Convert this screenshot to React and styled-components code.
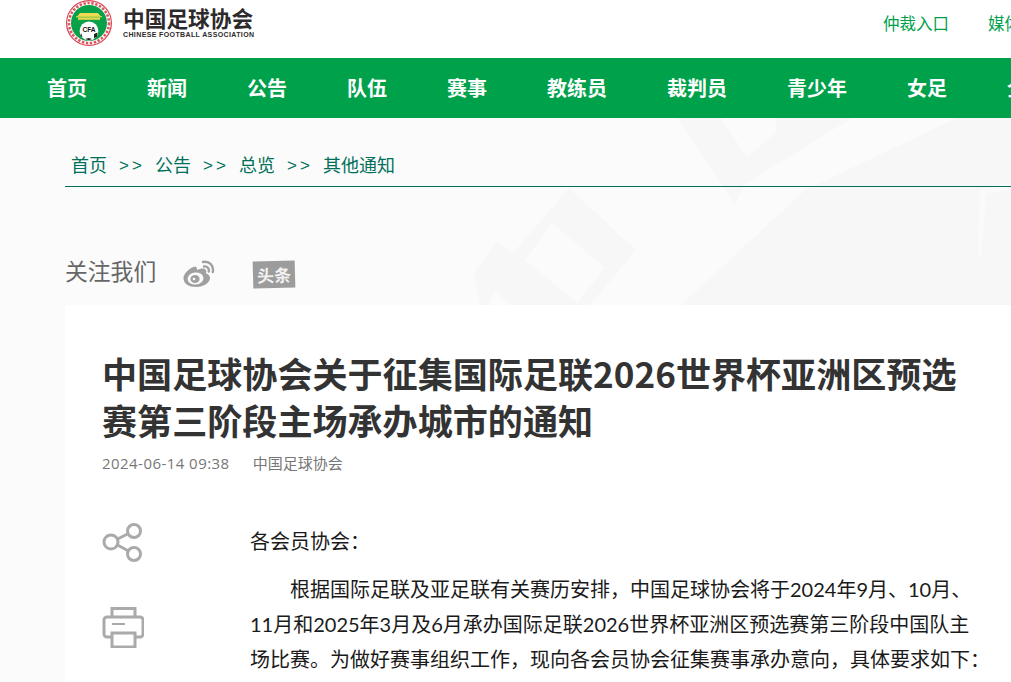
import React from "react";
import styled, { createGlobalStyle } from "styled-components";

const Global = createGlobalStyle`
  html, body { margin: 0; padding: 0; overflow: hidden; background: #fbfbfb; }
  body { font-family: "Noto Sans CJK SC", "Liberation Sans", sans-serif; }
  * { box-sizing: border-box; }
`;

const Page = styled.div`
  position: relative;
  width: 1011px;
  height: 682px;
  overflow: hidden;
  background: #fbfbfb;
`;
const Header = styled.header`
  height: 58px;
  background: #fff;
  display: flex;
  justify-content: space-between;
  padding-left: 66px;
`;
const LogoBox = styled.a`
  display: flex;
  align-items: flex-start;
  gap: 11px;
`;
const LogoText = styled.div`
  display: flex;
  flex-direction: column;
  padding-top: 5px;
  color: #2d2a2b;
`;
const LogoCn = styled.span`
  font-size: 21.7px;
  line-height: 25px;
  font-weight: 700;
  white-space: nowrap;
`;
const LogoEn = styled.span`
  margin-top: 1px;
  font-family: "Liberation Sans", sans-serif;
  font-size: 7px;
  line-height: 8px;
  font-weight: 700;
  letter-spacing: 0.38px;
  white-space: nowrap;
`;
const TopLinks = styled.nav`
  display: flex;
  gap: 39px;
  white-space: nowrap;
  padding-top: 11px;
  margin-right: -23px;
  width: 151px;
`;
const TopLink = styled.a`
  font-size: 16.5px;
  line-height: 24px;
  color: #00a14b;
`;
const MainNav = styled.nav`
  height: 60px;
  background: #00a14b;
  display: flex;
  align-items: center;
  gap: 60px;
  padding-left: 47px;
  white-space: nowrap;
`;
const NavItem = styled.a`
  color: #fff;
  font-size: 20px;
  font-weight: 700;
  line-height: 60px;
`;
const Watermark = styled.svg`
  position: absolute;
  left: 0;
  top: 118px;
  width: 1011px;
  height: 187px;
`;
const Content = styled.main`
  position: relative;
  padding-left: 65px;
`;
const Crumbs = styled.div`
  height: 69px;
  border-bottom: 1px solid #00705a;
  padding: 32px 0 0 6px;
  display: flex;
  gap: 12px;
  color: #00705a;
  font-size: 18px;
  line-height: 28px;
`;
const Sep = styled.span`
  flex: none;
  width: 24px;
  padding-top: 2px;
  font-family: "Liberation Sans", sans-serif;
  font-size: 17px;
  letter-spacing: 3px;
  white-space: nowrap;
`;
const Follow = styled.div`
  height: 118px;
  display: flex;
  align-items: flex-start;
  padding-top: 67px;
`;
const FollowLabel = styled.span`
  font-size: 22.8px;
  line-height: 34px;
  color: #666;
  width: 118px;
`;
const WeiboIcon = styled.svg`
  width: 32px;
  height: 28px;
  margin-top: 6px;
`;
const ToutiaoBadge = styled.span`
  margin: 7px 0 0 38px;
  width: 42px;
  height: 27px;
  background: #9c9c9c;
  color: #f2f2f2;
  font-size: 17px;
  line-height: 27px;
  font-weight: 700;
  text-align: center;
  white-space: nowrap;
  transform: rotate(-1.5deg);
`;
const Card = styled.article`
  background: #fff;
  height: 377px;
  padding: 44px 0 0 37px;
`;
const Title = styled.h1`
  margin: 0;
  width: 880px;
  font-size: 35.1px;
  line-height: 47px;
  font-weight: 700;
  color: #333;
`;
const Meta = styled.div`
  margin-top: 9px;
  display: flex;
  gap: 23px;
  font-size: 15px;
  line-height: 22px;
  color: #777;
`;
const MetaDate = styled.span`
  font-family: "Open Sans", "Liberation Sans", sans-serif;
  letter-spacing: 0.45px;
`;
const Body = styled.div`
  display: flex;
  margin-top: 50px;
`;
const Tools = styled.aside`
  width: 148px;
  flex: none;
  display: flex;
  flex-direction: column;
  gap: 42px;
  margin-top: -2px;
`;
const Text = styled.div`
  width: 745px;
  color: #1a1a1a;
  font-family: "Lato", "Noto Sans CJK SC", sans-serif;
  font-size: 20px;
  line-height: 35px;
`;
const Para = styled.p`
  margin: 0 0 13px;
  text-indent: ${(p) => (p.$indent ? "40px" : "0")};
`;

const navItems = ["首页", "新闻", "公告", "队伍", "赛事", "教练员", "裁判员", "青少年", "女足", "全民"];

function Emblem() {
  return (
    <svg width="46" height="46" viewBox="0 0 46 46" aria-hidden="true">
      <circle cx="23" cy="23" r="22.4" fill="#fff" stroke="#d8434f" strokeWidth="1.2" />
      <circle cx="23" cy="23" r="20" fill="none" stroke="#dd5560" strokeWidth="2.6" strokeDasharray="2.4 1.6" />
      <circle cx="23" cy="23" r="18" fill="#09a04a" />
      <path d="M14 13h18l2.500 3h-23z" fill="#eed94f" />
      <rect x="10" y="16" width="26" height="1.400" fill="#bfd44b" />
      <rect x="12" y="17.400" width="22" height="2.400" fill="#e6d64b" />
      <circle cx="23" cy="31" r="9.400" fill="#fff" />
      <path d="M28 34l3.500-1.500-.5 4-3 2zM15 33l1.500 4-2-1zM19 39l4-1 3 1-3 1.300z" fill="#222" />
      <text x="23" y="32" textAnchor="middle" fontFamily="Liberation Sans, sans-serif" fontWeight="700" fontSize="6.6" fill="#111">CFA</text>
    </svg>
  );
}

export default function App() {
  return (
    <Page>
      <Global />
      <Header>
        <LogoBox>
          <Emblem />
          <LogoText>
            <LogoCn>中国足球协会</LogoCn>
            <LogoEn>CHINESE FOOTBALL ASSOCIATION</LogoEn>
          </LogoText>
        </LogoBox>
        <TopLinks>
          <TopLink>仲裁入口</TopLink>
          <TopLink>媒体入口</TopLink>
        </TopLinks>
      </Header>
      <MainNav>
        {navItems.map((n) => (
          <NavItem key={n}>{n}</NavItem>
        ))}
      </MainNav>
      <Watermark viewBox="0 118 1011 187" aria-hidden="true">
        <g fill="#f7f7f7">
          <path d="M677 118h44l26 39 29-24v-15h76L745 184l-10 20z" />
          <path d="M681 305L805 190 957 118H1011V305z" />
          <path d="M569 188l67 62-46 55H480l-6-32 23-31 16 11z" />
        </g>
        <path d="M552 223l53 45-28 35-52-43z" fill="#fbfbfb" />
        <path d="M495 290l14 15h-20z" fill="#fbfbfb" />
        <path d="M980 190l31-8v8l-24 4-6 63-3-1z" fill="#fafafa" />
      </Watermark>
      <Content>
        <Crumbs>
          <span>首页</span>
          <Sep>&gt;&gt;</Sep>
          <span>公告</span>
          <Sep>&gt;&gt;</Sep>
          <span>总览</span>
          <Sep>&gt;&gt;</Sep>
          <span>其他通知</span>
        </Crumbs>
        <Follow>
          <FollowLabel>关注我们</FollowLabel>
          <WeiboIcon viewBox="0 0 32 28" aria-hidden="true">
            <path d="M12 6.500C6 8 .5 13.500.5 18.500.5 23.500 6 27 13 27c8 0 14-4.500 14-9 0-3-2.500-4-4-4.500 1-2.500 0-5.500-4-5-2 .2-3.500 1-5 1.500.3-2.500-1-4-3-3.500z" fill="#a0a0a0" />
            <ellipse cx="12.500" cy="18.500" rx="8" ry="6" fill="#fbfbfb" transform="rotate(-8 12.500 18.500)" />
            <ellipse cx="12" cy="19" rx="4.600" ry="4" fill="#a0a0a0" />
            <circle cx="11" cy="19" r="1.300" fill="#fbfbfb" />
            <path d="M21 6.500c3-.6 5.500 1.800 4.800 5" fill="none" stroke="#a0a0a0" strokeWidth="2.400" strokeLinecap="round" />
            <path d="M20 2c6.500-1.300 11 3.500 9.800 10" fill="none" stroke="#a0a0a0" strokeWidth="2.400" strokeLinecap="round" />
          </WeiboIcon>
          <ToutiaoBadge>头条</ToutiaoBadge>
        </Follow>
        <Card>
          <Title>中国足球协会关于征集国际足联2026世界杯亚洲区预选赛第三阶段主场承办城市的通知</Title>
          <Meta>
            <MetaDate>2024-06-14 09:38</MetaDate>
            <span>中国足球协会</span>
          </Meta>
          <Body>
            <Tools>
              <svg width="42" height="42" viewBox="0 0 42 42" fill="none" stroke="#aaa" strokeWidth="3" aria-hidden="true">
                <circle cx="9" cy="20" r="7" />
                <circle cx="32" cy="9" r="6.500" />
                <circle cx="32" cy="32" r="6.500" />
                <path d="M15.500 17l11-5.500M15.500 23l11 6" />
              </svg>
              <svg width="42" height="42" viewBox="0 0 42 42" fill="none" stroke="#aaa" strokeWidth="3" aria-hidden="true">
                <path d="M10 11V2.500h23V11" />
                <path d="M10 31H5a3 3 0 0 1-3-3V14a3 3 0 0 1 3-3h33a3 3 0 0 1 3 3v14a3 3 0 0 1-3 3h-5" />
                <rect x="10" y="27" width="23" height="14" />
                <path d="M10 18h13" strokeWidth="2" />
              </svg>
            </Tools>
            <Text>
              <Para>各会员协会：</Para>
              <Para $indent>
                根据国际足联及亚足联有关赛历安排，中国足球协会将于2024年9月、10月、<br />
                11月和2025年3月及6月承办国际足联2026世界杯亚洲区预选赛第三阶段中国队主<br />
                场比赛。为做好赛事组织工作，现向各会员协会征集赛事承办意向，具体要求如下：
              </Para>
            </Text>
          </Body>
        </Card>
      </Content>
    </Page>
  );
}
